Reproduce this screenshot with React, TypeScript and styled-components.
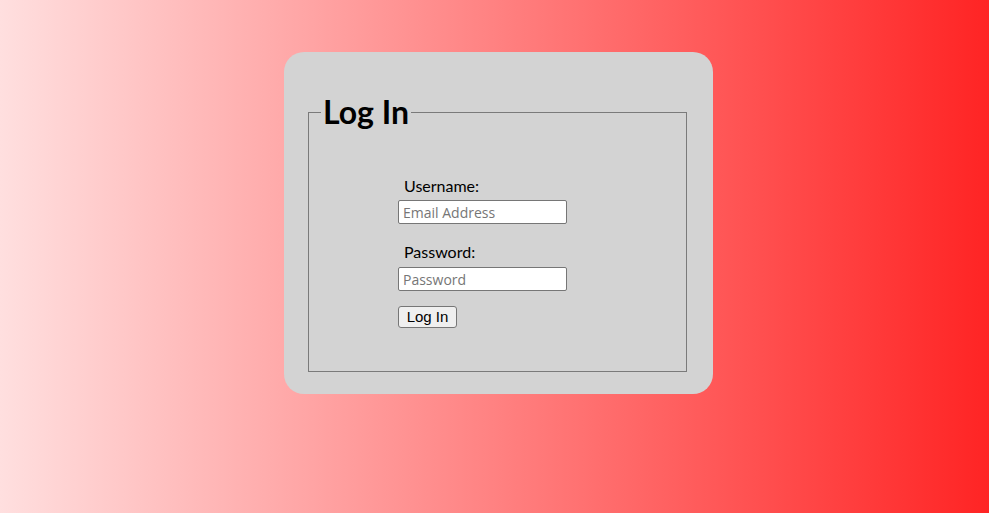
import React from "react";
import styled, { createGlobalStyle } from "styled-components";

const GlobalStyle = createGlobalStyle`
  html, body {
    margin: 0;
    padding: 0;
  }
  body {
    min-height: 513px;
    background: linear-gradient(to right, #ffdfdf 0%, #ff2424 100%);
    font-family: "Lato", "DejaVu Sans", sans-serif;
  }
`;

const Page = styled.main`
  display: flex;
  align-items: flex-start;
  min-height: 513px;
  padding: 52px 0 0 284px;
  box-sizing: border-box;
`;

const Card = styled.section`
  display: flex;
  box-sizing: border-box;
  width: 429px;
  height: 342px;
  padding: 41px 26px 22px 24px;
  background: #d3d3d3;
  border-radius: 20px;
`;

const Fieldset = styled.fieldset`
  flex: 1;
  margin: 0;
  padding: 0 12px 0 89px;
  border: 1px solid #7a7a7a;
  display: flex;
  flex-direction: column;
  align-items: flex-start;
`;

const Legend = styled.legend`
  margin-left: -77px;
  padding: 0 2px;
  font-family: "Lato", "DejaVu Sans", sans-serif;
  font-weight: 700;
  font-size: 32px;
  line-height: 38px;
  color: #000;
`;

const Label = styled.label<{ $top: number }>`
  display: block;
  margin-top: ${(p) => p.$top}px;
  padding-left: 6px;
  font-family: "Lato", "DejaVu Sans", sans-serif;
  font-size: 16px;
  line-height: 19px;
  color: #000;
`;

const Input = styled.input<{ $top: number }>`
  box-sizing: border-box;
  width: 169px;
  height: 24px;
  margin-top: ${(p) => p.$top}px;
  padding: 0 4px;
  border: 1px solid #767676;
  border-radius: 2px;
  background: #fff;
  font-family: "Open Sans", "DejaVu Sans", sans-serif;
  font-size: 14px;
  color: #000;
  &::placeholder {
    color: #767676;
  }
`;

const Button = styled.button`
  box-sizing: border-box;
  width: 59px;
  height: 22px;
  margin-top: 15px;
  padding: 0 6px;
  border: 1px solid #767676;
  border-radius: 3px;
  background: #efefef;
  font-family: "Liberation Sans", Arial, sans-serif;
  font-size: 15px;
  line-height: 18px;
  color: #000;
`;

export default function App() {
  return (
    <>
      <GlobalStyle />
      <Page>
        <Card>
          <Fieldset>
            <Legend>Log In</Legend>
            <Label $top={45} htmlFor="user">Username:</Label>
            <Input $top={5} id="user" type="text" placeholder="Email Address" />
            <Label $top={18} htmlFor="pass">Password:</Label>
            <Input $top={6} id="pass" type="password" placeholder="Password" />
            <Button type="button">Log In</Button>
          </Fieldset>
        </Card>
      </Page>
    </>
  );
}
